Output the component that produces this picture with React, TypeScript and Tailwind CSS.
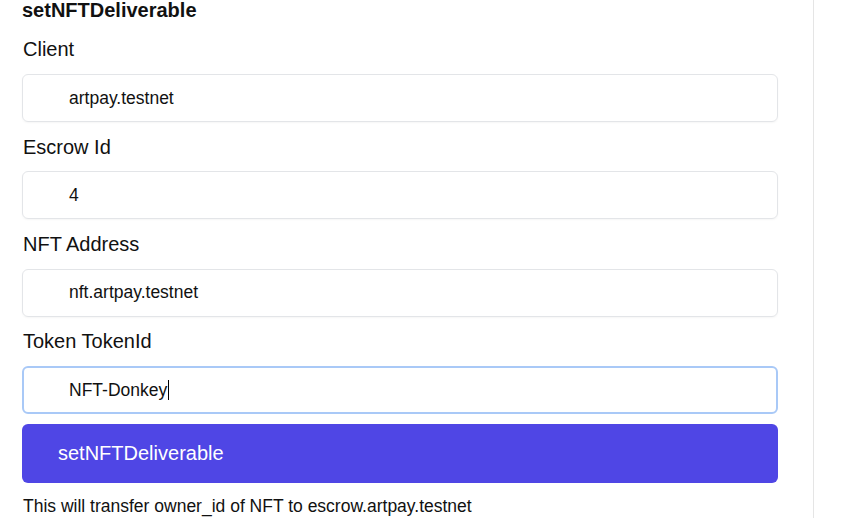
import React from 'react'

const fields = [
  { label: 'Client', value: 'artpay.testnet' },
  { label: 'Escrow Id', value: '4' },
  { label: 'NFT Address', value: 'nft.artpay.testnet' },
  { label: 'Token TokenId', value: 'NFT-Donkey', focused: true },
]

export default function App() {
  return (
    <div
      className="flex h-[518px] w-full overflow-hidden bg-white text-[#111]"
      style={{ fontFamily: '"Liberation Sans", Arial, sans-serif' }}>
      <div className="w-[814px] shrink-0 border-r border-[#e5e5e5] pl-[22px] pr-[35px]">
        <h2 className="text-[20px] font-bold leading-[20px]">setNFTDeliverable</h2>
        <div className="mt-[4.67px] flex flex-col">
          {fields.map((f) => (
            <div key={f.label} className="flex flex-col">
              <label className="mt-[10.67px] mb-[10.67px] text-[20px] leading-[28px] pl-[1px]">
                {f.label}
              </label>
              <div
                className={
                  f.focused
                    ? 'flex h-[48px] items-center rounded-md border-2 border-[#a9c9f7] pl-[45px] text-[17.5px]'
                    : 'flex h-[48px] items-center rounded-md border border-[#e3e5e8] pl-[46px] text-[17.5px] shadow-[0_1px_2px_rgba(0,0,0,0.04)]'
                }>
                <span>{f.value}</span>
                {f.focused && <span className="ml-[1px] h-[20px] w-px bg-black" />}
              </div>
            </div>
          ))}
        </div>
        <button className="mt-[10px] flex h-[59px] w-full items-center rounded-md bg-[#4f46e5] pl-[36px] text-[20px] text-white">
          setNFTDeliverable
        </button>
        <p className="mt-[11px] text-[17.5px] leading-[24px] pl-[1px]">
          This will transfer owner_id of NFT to escrow.artpay.testnet
        </p>
      </div>
      <div className="flex-1" />
    </div>
  )
}
